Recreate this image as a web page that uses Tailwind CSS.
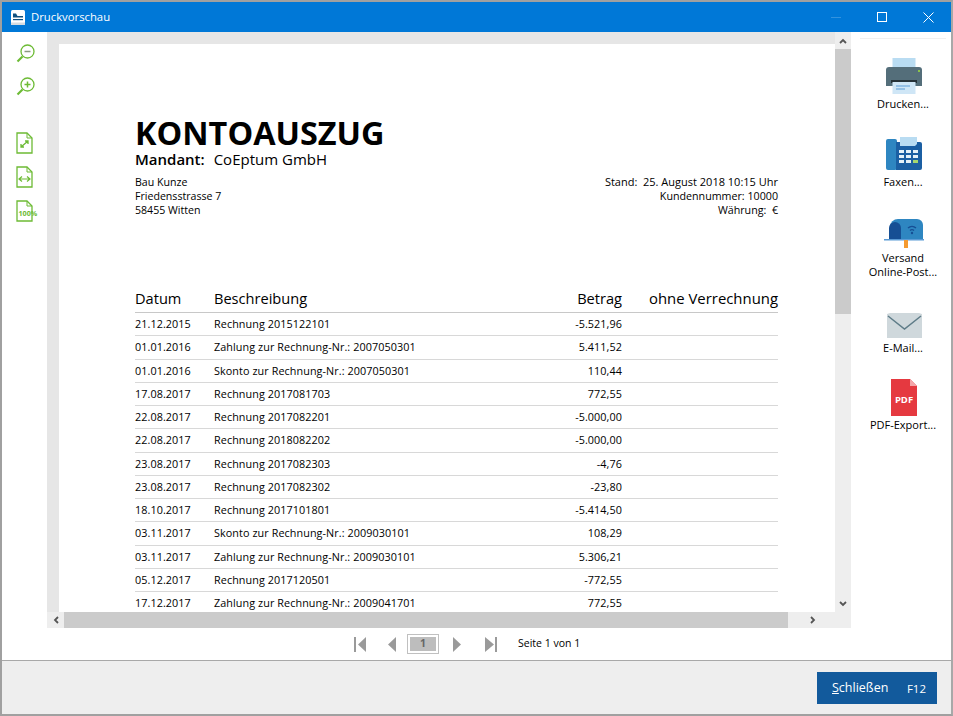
<!DOCTYPE html>
<html lang="de">
<head>
  <meta charset="UTF-8">
  <title>Druckvorschau</title>
  <script src="https://cdn.jsdelivr.net/npm/@tailwindcss/browser@4"></script>
</head>
<body class="w-[953px] h-[716px] overflow-hidden bg-white font-['Open_Sans','Noto_Sans',sans-serif] text-black">
  <div class="w-[953px] h-[716px] flex flex-col border-x-2 border-b-2 border-t-2 border-[#a0a0a0] border-r-[#a8a8a8]">

    <!-- title bar -->
    <div class="h-[30px] shrink-0 bg-[#0078d7] flex items-center text-white pl-[9px]">
      <svg class="w-[14px] h-[15px]" viewBox="0 0 14 15"><rect x="0" y="0" width="14" height="15" rx="1.5" fill="#fff"/><path d="M2 3.500h3l1.500 2.500h5.500v1.500h-10z" fill="#10507f"/><rect x="2" y="9" width="10" height="1.200" fill="#10507f"/><rect x="0" y="12.500" width="14" height="2.500" fill="#d5dbe0"/></svg>
      <span class="ml-[6px] text-[11.3px]">Druckvorschau</span>
      <div class="ml-auto flex items-center">
        <div class="w-[46px] flex justify-center"><div class="w-[10px] h-px bg-white/20"></div></div>
        <div class="w-[46px] flex justify-center"><div class="w-[10px] h-[10px] border border-white"></div></div>
        <div class="w-[46px] flex justify-center">
          <svg class="w-[11px] h-[11px]" viewBox="0 0 11 11"><path d="M.5.5l10 10M10.500.5l-10 10" stroke="#fff" fill="none"/></svg>
        </div>
      </div>
    </div>

    <div class="flex-1 flex flex-col min-h-0">
      <div class="flex h-[596px] shrink-0">
        <!-- left tools -->
        <div class="w-[45px] shrink-0 flex flex-col items-center pt-[11px] pl-[2px]">
          <svg class="w-[20px] h-[21px]" viewBox="0 0 20 21"><circle cx="11.500" cy="8.500" r="6.500" fill="none" stroke="#6dbb35" stroke-width="1.300"/><path d="M8.500 8.500h6" stroke="#8a9a80" stroke-width="1.500"/><path d="M6.500 13.500l-5 5" stroke="#6dbb35" stroke-width="2.200"/></svg>
          <svg class="w-[20px] h-[21px] mt-[12px]" viewBox="0 0 20 21"><circle cx="11.500" cy="8.500" r="6.500" fill="none" stroke="#6dbb35" stroke-width="1.300"/><path d="M8.500 8.500h6M11.500 5.500v6" stroke="#6dbb35" stroke-width="1.500"/><path d="M6.500 13.500l-5 5" stroke="#6dbb35" stroke-width="2.200"/></svg>
          <svg class="w-[17px] h-[22px] mt-[35px] mr-[2px]" viewBox="0 0 17 22"><path d="M1 1h10l5 5v15H1z" fill="#fff" stroke="#6dbb35" stroke-width="1.300"/><path d="M11 1v5h5" fill="none" stroke="#6dbb35"/><path d="M5 15l7-6M9 9h3v3M8 15H5v-3" fill="none" stroke="#6dbb35" stroke-width="1.300"/></svg>
          <svg class="w-[17px] h-[22px] mt-[12px] mr-[2px]" viewBox="0 0 17 22"><path d="M1 1h10l5 5v15H1z" fill="#fff" stroke="#6dbb35" stroke-width="1.300"/><path d="M11 1v5h5" fill="none" stroke="#6dbb35"/><path d="M3 13h11M6 10.500l-3 2.500 3 2.500M11 10.500l3 2.500-3 2.500" fill="none" stroke="#6dbb35" stroke-width="1.200"/></svg>
          <div class="relative w-[22px] h-[22px] mt-[12px] ml-[2px]">
            <svg class="w-[17px] h-[22px]" viewBox="0 0 17 22"><path d="M1 1h10l5 5v15H1z" fill="#fff" stroke="#6dbb35" stroke-width="1.300"/><path d="M11 1v5h5" fill="none" stroke="#6dbb35"/></svg>
            <span class="absolute left-[3px] top-[8px] text-[7.2px] font-bold leading-[10px] text-[#6dbb35]">100%</span>
          </div>
        </div>

        <!-- preview area -->
        <div class="w-[804px] shrink-0 flex flex-col">
          <div class="flex h-[580px]">
            <div class="flex-1 bg-[#e6e6e6] pl-[12px] pt-[12px] overflow-hidden">
              <div class="w-[776px] h-[568px] bg-white pt-[70px] pl-[76px] pr-[57px] overflow-hidden">
                <div class="text-[32.4px] font-bold leading-[36px]">KONTOAUSZUG</div>
                <div class="flex items-baseline text-[15px] leading-[20px] mt-[-1px]">
                  <span class="font-semibold">Mandant:</span><span class="ml-[9px]">CoEptum GmbH</span>
                </div>
                <div class="flex justify-between text-[10.6px] leading-[14px] mt-[6px]">
                  <div>Bau Kunze<br>Friedensstrasse 7<br>58455 Witten</div>
                  <div class="text-right text-[10.7px]"><span class="text-[11px]">Stand:&nbsp; 25. August 2018 10:15 Uhr</span><br>Kundennummer: 10000<br>Währung:&nbsp; €</div>
                </div>
                <div class="grid grid-cols-[79px_1fr_80px_156px] text-[14.6px] leading-[20px] mt-[70px] h-[26px] pb-[4px] border-b border-[#c8c8c8] items-center font-medium">
                  <div>Datum</div><div>Beschreibung</div><div class="text-right">Betrag</div><div class="text-right text-[14.9px]">ohne Verrechnung</div>
                </div>
                <div class="text-[10.8px] tracking-[0.08px]">
                  <div class="grid grid-cols-[79px_1fr_80px_156px] h-[23.25px] border-b border-[#d8d8d8] items-center"><div>21.12.2015</div><div>Rechnung 2015122101</div><div class="text-right">-5.521,96</div><div></div></div>
                  <div class="grid grid-cols-[79px_1fr_80px_156px] h-[23.25px] border-b border-[#d8d8d8] items-center"><div>01.01.2016</div><div>Zahlung zur Rechnung-Nr.: 2007050301</div><div class="text-right">5.411,52</div><div></div></div>
                  <div class="grid grid-cols-[79px_1fr_80px_156px] h-[23.25px] border-b border-[#d8d8d8] items-center"><div>01.01.2016</div><div>Skonto zur Rechnung-Nr.: 2007050301</div><div class="text-right">110,44</div><div></div></div>
                  <div class="grid grid-cols-[79px_1fr_80px_156px] h-[23.25px] border-b border-[#d8d8d8] items-center"><div>17.08.2017</div><div>Rechnung 2017081703</div><div class="text-right">772,55</div><div></div></div>
                  <div class="grid grid-cols-[79px_1fr_80px_156px] h-[23.25px] border-b border-[#d8d8d8] items-center"><div>22.08.2017</div><div>Rechnung 2017082201</div><div class="text-right">-5.000,00</div><div></div></div>
                  <div class="grid grid-cols-[79px_1fr_80px_156px] h-[23.25px] border-b border-[#d8d8d8] items-center"><div>22.08.2017</div><div>Rechnung 2018082202</div><div class="text-right">-5.000,00</div><div></div></div>
                  <div class="grid grid-cols-[79px_1fr_80px_156px] h-[23.25px] border-b border-[#d8d8d8] items-center"><div>23.08.2017</div><div>Rechnung 2017082303</div><div class="text-right">-4,76</div><div></div></div>
                  <div class="grid grid-cols-[79px_1fr_80px_156px] h-[23.25px] border-b border-[#d8d8d8] items-center"><div>23.08.2017</div><div>Rechnung 2017082302</div><div class="text-right">-23,80</div><div></div></div>
                  <div class="grid grid-cols-[79px_1fr_80px_156px] h-[23.25px] border-b border-[#d8d8d8] items-center"><div>18.10.2017</div><div>Rechnung 2017101801</div><div class="text-right">-5.414,50</div><div></div></div>
                  <div class="grid grid-cols-[79px_1fr_80px_156px] h-[23.25px] border-b border-[#d8d8d8] items-center"><div>03.11.2017</div><div>Skonto zur Rechnung-Nr.: 2009030101</div><div class="text-right">108,29</div><div></div></div>
                  <div class="grid grid-cols-[79px_1fr_80px_156px] h-[23.25px] border-b border-[#d8d8d8] items-center"><div>03.11.2017</div><div>Zahlung zur Rechnung-Nr.: 2009030101</div><div class="text-right">5.306,21</div><div></div></div>
                  <div class="grid grid-cols-[79px_1fr_80px_156px] h-[23.25px] border-b border-[#d8d8d8] items-center"><div>05.12.2017</div><div>Rechnung 2017120501</div><div class="text-right">-772,55</div><div></div></div>
                  <div class="grid grid-cols-[79px_1fr_80px_156px] h-[23.25px] border-b border-[#d8d8d8] items-center"><div>17.12.2017</div><div>Zahlung zur Rechnung-Nr.: 2009041701</div><div class="text-right">772,55</div><div></div></div>
                </div>
              </div>
            </div>
            <!-- vertical scrollbar -->
            <div class="w-[16px] bg-[#eeeeee] flex flex-col">
              <div class="h-[17px] flex items-center justify-center"><svg class="w-[8px] h-[6px]" viewBox="0 0 8 6"><path d="M1 5l3-3 3 3" fill="none" stroke="#555" stroke-width="1.800"/></svg></div>
              <div class="h-[265px] bg-[#cbcbcb]"></div>
              <div class="flex-1"></div>
              <div class="h-[17px] flex items-center justify-center"><svg class="w-[8px] h-[6px]" viewBox="0 0 8 6"><path d="M1 1l3 3 3-3" fill="none" stroke="#555" stroke-width="1.800"/></svg></div>
            </div>
          </div>
          <!-- horizontal scrollbar -->
          <div class="h-[16px] bg-[#eeeeee] flex items-center">
            <div class="w-[17px] flex justify-center"><svg class="w-[6px] h-[8px]" viewBox="0 0 6 8"><path d="M5 1L2 4l3 3" fill="none" stroke="#555" stroke-width="1.800"/></svg></div>
            <div class="w-[724px] h-full bg-[#cbcbcb]"></div>
            <div class="flex-1 flex justify-center pr-[13px]"><svg class="w-[6px] h-[8px]" viewBox="0 0 6 8"><path d="M1 1l3 3-3 3" fill="none" stroke="#555" stroke-width="1.800"/></svg></div>
          </div>
        </div>

        <!-- right actions -->
        <div class="flex-1 flex flex-col items-center text-[11px] leading-[14px] text-center pt-[6px] pl-[4px]">
          <div class="w-[86px] h-px bg-[#f0f0f0]"></div>
          <svg class="w-[36px] h-[36px] mt-[19px] ml-[2px]" viewBox="0 0 36 36"><rect x="6.500" y="0" width="23" height="11" fill="#b9dcf2"/><path d="M3 9h30a3 3 0 013 3v16H0V12a3 3 0 013-3z" fill="#546e7a"/><rect x="32" y="12" width="2" height="2" fill="#8bc34a"/><rect x="5" y="22" width="26" height="3" fill="#263238"/><rect x="6.500" y="24" width="23" height="12" fill="#cfe6f6"/><path d="M10 28h14M10 31h9" stroke="#5b9bd5" stroke-width="1"/></svg>
          <div class="mt-[3px]">Drucken...</div>
          <svg class="w-[36px] h-[33px] mt-[26px] ml-[2px]" viewBox="0 0 36 33"><rect x="0" y="2" width="11" height="31" rx="2" fill="#2e86c1"/><path d="M10 5h24a2 2 0 012 2v24a2 2 0 01-2 2H10z" fill="#1b5fa3"/><path d="M14 0h17v7l-2 2H14z" fill="#b9dcf2"/><g fill="#e4f1f9"><rect x="13" y="13" width="5" height="3"/><rect x="20" y="13" width="5" height="3"/><rect x="27" y="13" width="5" height="3"/><rect x="13" y="18" width="5" height="3"/><rect x="20" y="18" width="5" height="3"/><rect x="27" y="18" width="5" height="3"/><rect x="13" y="23" width="5" height="3"/><rect x="20" y="23" width="5" height="3"/></g><rect x="27" y="23" width="5" height="3" fill="#a5d66f"/></svg>
          <div class="mt-[5px]">Faxen...</div>
          <svg class="w-[40px] h-[29px] mt-[30px] ml-[2px]" viewBox="0 0 40 29"><path d="M6 21V8a8 8 0 018-8h19a6 6 0 016 6v15z" fill="#2e86c1"/><path d="M5 21V9a6 6 0 016-6 6 6 0 016 6v12z" fill="#164f94"/><rect x="0" y="20" width="40" height="1.500" fill="#5b9bd5"/><rect x="20" y="21" width="4" height="8" fill="#f59a2f"/><path d="M24 9a6 6 0 018 0M26 11.500a3 3 0 014 0" fill="none" stroke="#164f94" stroke-width="1.400"/><circle cx="28" cy="14" r="1.200" fill="#164f94"/></svg>
          <div class="mt-[3px]">Versand<br>Online-Post...</div>
          <svg class="w-[35px] h-[25px] mt-[34px] ml-[2px]" viewBox="0 0 35 25"><path d="M0 1l3-1h29l3 1v24H0z" fill="#cfd8dc"/><path d="M1 3l16.500 13L34 3" fill="none" stroke="#5e7c88" stroke-width="1.500"/></svg>
          <div class="mt-[3px]">E-Mail...</div>
          <svg class="w-[26px] h-[37px] mt-[24px] ml-[2px]" viewBox="0 0 26 37"><path d="M0 0h19l7 7v30H0z" fill="#e53940"/><path d="M19 0l7 7h-7z" fill="#f4a6a9"/><text x="13" y="23.500" text-anchor="middle" font-size="9.500" font-weight="700" fill="#fff" font-family="Open Sans">PDF</text></svg>
          <div class="mt-[2px]">PDF-Export...</div>
        </div>
      </div>

      <!-- page navigation -->
      <div class="h-[32px] shrink-0 flex items-center text-[10.5px] pl-[352px]">
        <svg class="w-[13px] h-[17px]" viewBox="0 0 13 17"><rect x="0" y="1" width="2" height="15" fill="#9a9a9a"/><path d="M12 1v15L4 8.500z" fill="#9a9a9a"/></svg>
        <svg class="w-[10px] h-[17px] ml-[20px]" viewBox="0 0 10 17"><path d="M9 1v15L1 8.500z" fill="#9a9a9a"/></svg>
        <div class="ml-[10px] w-[32px] h-[20px] border border-[#c0c0c0] p-[2px]"><div class="h-full bg-[#bdbdbd] flex items-center justify-center font-bold text-[#666]">1</div></div>
        <svg class="w-[10px] h-[17px] ml-[13px]" viewBox="0 0 10 17"><path d="M1 1v15l8-7.500z" fill="#9a9a9a"/></svg>
        <svg class="w-[14px] h-[17px] ml-[22px]" viewBox="0 0 14 17"><path d="M1 1v15l9-7.500z" fill="#9a9a9a"/><rect x="11" y="1" width="2" height="15" fill="#9a9a9a"/></svg>
        <span class="ml-[20px]">Seite 1 von 1</span>
      </div>

      <!-- footer -->
      <div class="flex-1 bg-[#eeeeee] border-t border-[#a8a8a8] flex justify-end items-start pt-[11px] pr-[14px]">
        <div class="w-[120px] h-[32px] bg-[#125a9c] text-white text-[12.5px] flex items-center pl-[15px] pr-[11px] pt-[1px] justify-between">
          <span><span class="underline">S</span>chließen</span><span class="text-[11.5px]">F12</span>
        </div>
      </div>
    </div>
  </div>
</body>
</html>
